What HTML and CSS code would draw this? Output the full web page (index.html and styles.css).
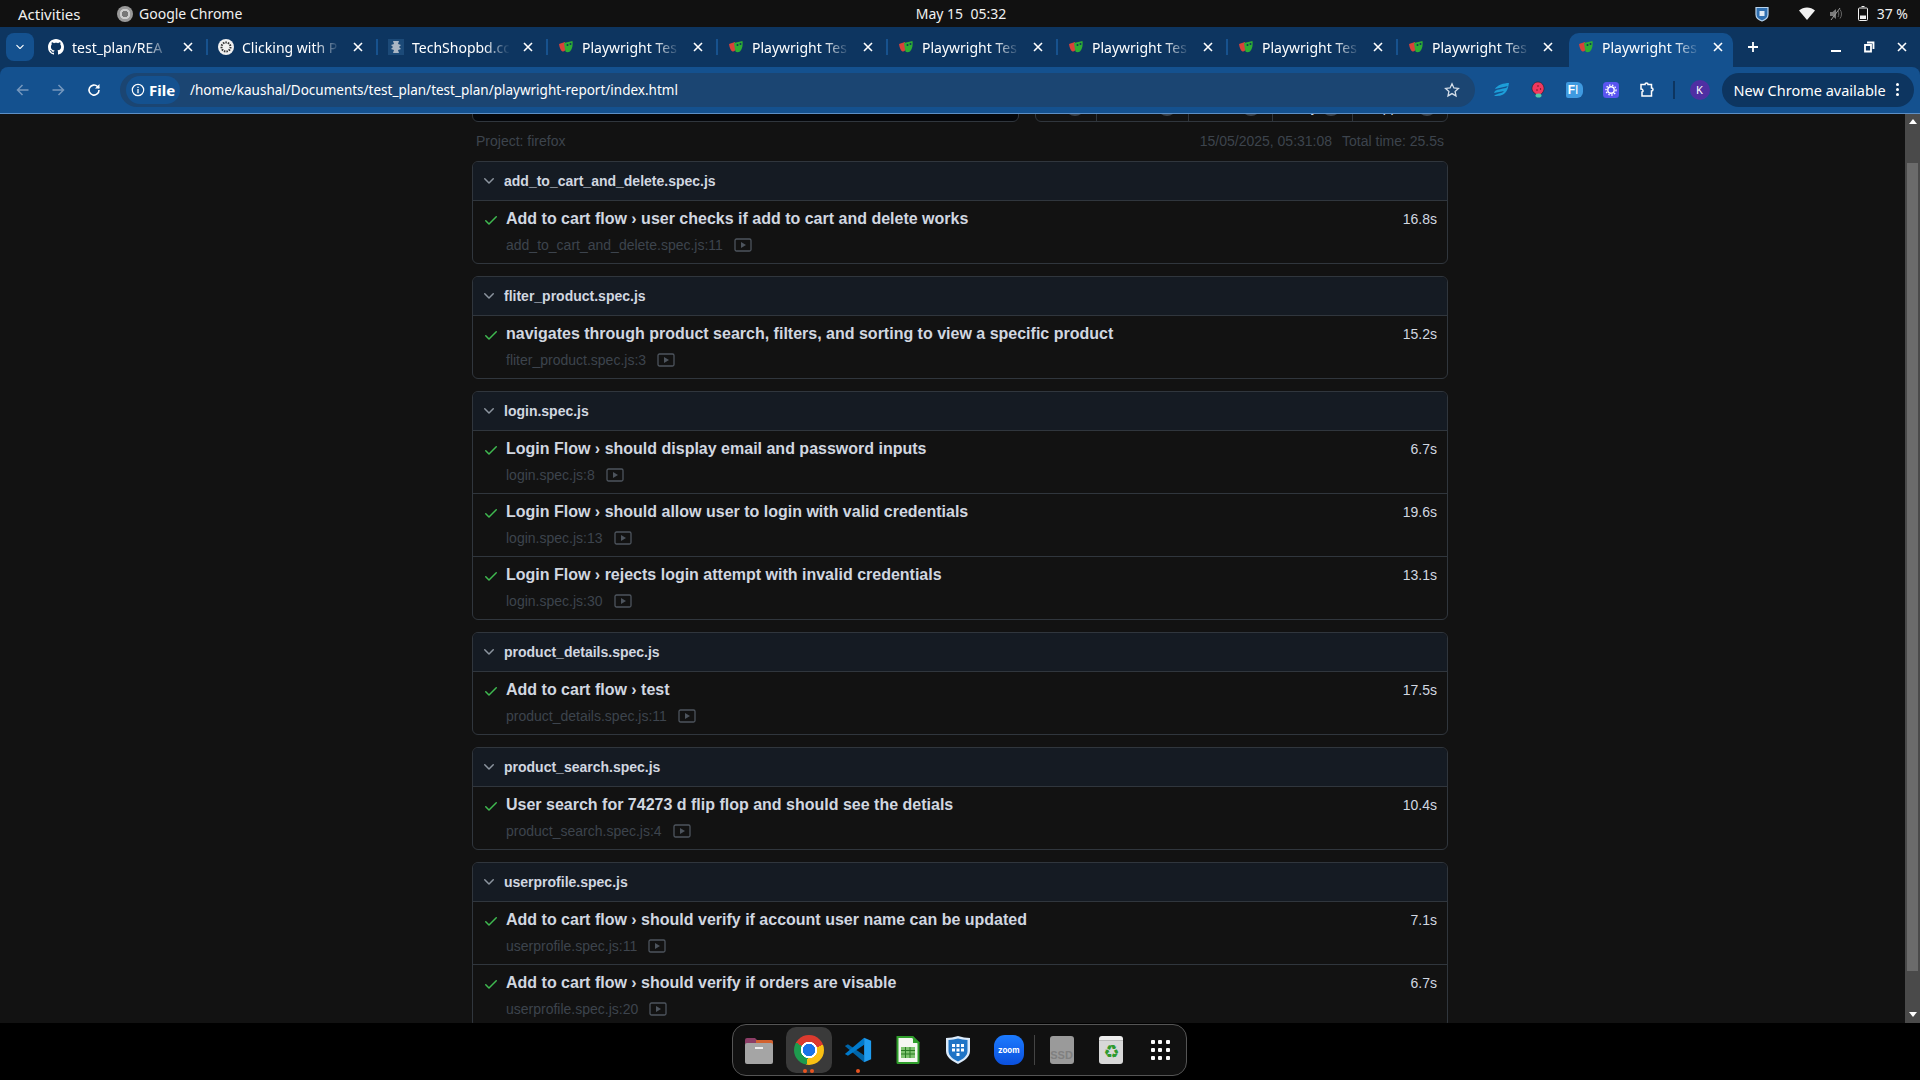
FILE: index.html
```html
<!DOCTYPE html>
<html lang="en">
<head>
  <meta charset="UTF-8">
  <title>Playwright Test Report</title>
  <link rel="stylesheet" href="styles.css">
</head>
<body>
  <svg class="defs" width="0" height="0">
    <symbol id="i-check" viewBox="0 0 16 16"><path d="M13.78 4.22a.75.75 0 0 1 0 1.06l-7.25 7.25a.75.75 0 0 1-1.06 0L2.22 9.28a.751.751 0 0 1 .018-1.042.751.751 0 0 1 1.042-.018L6 10.94l6.72-6.72a.75.75 0 0 1 1.06 0Z"/></symbol>
    <symbol id="i-chevron" viewBox="0 0 16 16"><path d="M12.78 5.22a.749.749 0 0 1 0 1.06l-4.25 4.25a.749.749 0 0 1-1.06 0L3.22 6.28a.749.749 0 1 1 1.06-1.06L8 8.939l3.72-3.719a.749.749 0 0 1 1.06 0Z"/></symbol>
    <symbol id="i-search" viewBox="0 0 16 16"><path d="M10.68 11.74a6 6 0 0 1-7.922-8.982 6 6 0 0 1 8.982 7.922l3.04 3.04a.749.749 0 0 1-.326 1.275.749.749 0 0 1-.734-.215ZM11.5 7a4.499 4.499 0 1 0-8.997 0A4.499 4.499 0 0 0 11.5 7Z"/></symbol>
    <symbol id="i-video" viewBox="0 0 18 14"><rect x="1" y="1" width="16" height="12" rx="1.5" fill="none" stroke="currentColor" stroke-width="1.3"/><path d="M7 4l5 3-5 3z" fill="currentColor"/></symbol>
    <symbol id="i-close" viewBox="0 0 12 12"><path d="M2 2l8 8M10 2l-8 8" stroke="currentColor" stroke-width="1.6" fill="none"/></symbol>
    <symbol id="i-mask" viewBox="0 0 16 16"><path d="M1 5l6-2 1 6c0 2-2 4-3.500 3.500C3 12 1.500 9 1 5z" fill="#d8423a"/><path d="M6 4l8.500-2c.5 4 0 8-2.500 10.500-1.500 1-3.500 1-4.500 0C6.800 10 6.500 7 6 4z" fill="#2ead33"/><circle cx="9.500" cy="6" r="1" fill="#0d3560"/><circle cx="12.500" cy="5" r="1" fill="#0d3560"/></symbol>
  </svg>

  <div class="topbar">
    <div class="topbar-left">
      <span class="activities">Activities</span>
      <span class="chrome-mono"></span>
      <span>Google Chrome</span>
    </div>
    <div class="clock">May 15&nbsp; 05:32</div>
    <div class="topbar-right">
      <svg class="tray-shield" width="14" height="16" viewBox="0 0 14 16"><path d="M1 1.500h12v7c0 3-3 5.500-6 6.500-3-1-6-3.500-6-6.500z" fill="#2f6fb0" stroke="#b9d4ee" stroke-width="1.200"/><rect x="4.500" y="5" width="5" height="5" fill="#dfeaf5"/></svg>
      <svg class="tray-wifi" width="16" height="13" viewBox="0 0 16 13"><path d="M0 3.500C4.500-.5 11.500-.5 16 3.500L8 13z" fill="#f2f2f2"/></svg>
      <svg class="tray-sound" width="15" height="14" viewBox="0 0 15 14"><path d="M1 5h2.500L7 2v10L3.500 9H1z" fill="#7a7a7a"/><path d="M9 4c1 1.500 1 4.500 0 6M11 2.500c2 2.500 2 6.500 0 9" stroke="#666" fill="none"/><path d="M2 13L11 1" stroke="#999"/></svg>
      <svg class="tray-battery" width="10" height="15" viewBox="0 0 10 15"><path d="M3.500.5h3M1.500 2h7a1 1 0 0 1 1 1v10.500a1 1 0 0 1-1 1h-7a1 1 0 0 1-1-1V3a1 1 0 0 1 1-1z" fill="none" stroke="#f2f2f2"/><rect x="2" y="9.500" width="6" height="3.500" fill="#f2f2f2"/></svg>
      <span class="battery-text">37 %</span>
    </div>
  </div>

  <div class="browser">
    <div class="tabstrip">
      <button class="tabs-menu"><svg width="12" height="12"><use href="#i-chevron"/></svg></button>
      <div class="tab">
        <svg class="favicon github" viewBox="0 0 16 16"><path d="M8 0c4.420 0 8 3.580 8 8a8.013 8.013 0 0 1-5.450 7.590c-.4.080-.55-.170-.55-.380 0-.270.010-1.130.010-2.200 0-.750-.250-1.230-.540-1.480 1.780-.2 3.650-.880 3.650-3.950 0-.880-.310-1.590-.820-2.150.080-.2.360-1.020-.080-2.120 0 0-.670-.220-2.200.820-.640-.180-1.320-.270-2-.270-.680 0-1.360.090-2 .270-1.530-1.030-2.200-.820-2.200-.820-.440 1.100-.160 1.920-.080 2.120-.510.560-.820 1.280-.820 2.150 0 3.060 1.860 3.750 3.640 3.950-.230.2-.440.550-.510 1.070-.460.210-1.610.550-2.330-.660-.150-.240-.6-.830-1.230-.820-.670.010-.270.380.010.530.340.190.730.9.820 1.130.160.450.680 1.310 2.690.940 0 .670.010 1.300.010 1.490 0 .210-.150.450-.550.380A7.995 7.995 0 0 1 0 8c0-4.420 3.580-8 8-8Z"/></svg>
        <span class="tab-title">test_plan/REA</span>
        <svg class="tab-close"><use href="#i-close"/></svg>
      </div>
      <div class="tab">
        <svg class="favicon" viewBox="0 0 16 16"><circle cx="8" cy="8" r="8" fill="#f1f1f1"/><circle cx="8" cy="8" r="4.500" fill="none" stroke="#333" stroke-width="2" stroke-dasharray="1.500 1"/></svg>
        <span class="tab-title">Clicking with P</span>
        <svg class="tab-close"><use href="#i-close"/></svg>
      </div>
      <div class="tab">
        <svg class="favicon" viewBox="0 0 16 16"><rect width="16" height="16" fill="#1c4a78"/><path d="M5 2h6l-1 3 3 1-2 2 2 2-3 1 1 3H5l1-3-3-1 2-2-2-2 3-1z" fill="#aab6c4"/></svg>
        <span class="tab-title">TechShopbd.cc</span>
        <svg class="tab-close"><use href="#i-close"/></svg>
      </div>
      <div class="tab"><svg class="favicon"><use href="#i-mask"/></svg><span class="tab-title">Playwright Tes</span><svg class="tab-close"><use href="#i-close"/></svg></div>
      <div class="tab"><svg class="favicon"><use href="#i-mask"/></svg><span class="tab-title">Playwright Tes</span><svg class="tab-close"><use href="#i-close"/></svg></div>
      <div class="tab"><svg class="favicon"><use href="#i-mask"/></svg><span class="tab-title">Playwright Tes</span><svg class="tab-close"><use href="#i-close"/></svg></div>
      <div class="tab"><svg class="favicon"><use href="#i-mask"/></svg><span class="tab-title">Playwright Tes</span><svg class="tab-close"><use href="#i-close"/></svg></div>
      <div class="tab"><svg class="favicon"><use href="#i-mask"/></svg><span class="tab-title">Playwright Tes</span><svg class="tab-close"><use href="#i-close"/></svg></div>
      <div class="tab before-active"><svg class="favicon"><use href="#i-mask"/></svg><span class="tab-title">Playwright Tes</span><svg class="tab-close"><use href="#i-close"/></svg></div>
      <div class="tab active"><svg class="favicon"><use href="#i-mask"/></svg><span class="tab-title">Playwright Tes</span><svg class="tab-close"><use href="#i-close"/></svg></div>
      <svg class="new-tab" width="14" height="14" viewBox="0 0 14 14"><path d="M7 2v10M2 7h10" stroke="#fff" stroke-width="1.800"/></svg>
      <div class="window-controls">
        <svg width="12" height="12" viewBox="0 0 12 12"><path d="M1 10h10" stroke="#fff" stroke-width="2"/></svg>
        <svg width="12" height="12" viewBox="0 0 12 12"><path d="M4 1.500h6.500V8M2 4h6v6.500H2z" fill="none" stroke="#fff" stroke-width="1.800"/></svg>
        <svg width="12" height="12"><use href="#i-close"/></svg>
      </div>
    </div>

    <div class="toolbar">
      <span class="nav-btn"><svg width="16" height="16" viewBox="0 0 16 16"><path d="M13.500 8h-11M7.500 3l-5 5 5 5" fill="none" stroke="#7597bd" stroke-width="1.500"/></svg></span>
      <span class="nav-btn"><svg width="16" height="16" viewBox="0 0 16 16"><path d="M2.500 8h11M8.500 3l5 5-5 5" fill="none" stroke="#7597bd" stroke-width="1.500"/></svg></span>
      <span class="nav-btn reload"><svg width="16" height="16" viewBox="0 0 16 16"><path d="M13 8a5 5 0 1 1-1.500-3.500L13 6" fill="none" stroke="#fff" stroke-width="1.600"/><path d="M13.500 2v4.500H9z" fill="#fff"/></svg></span>
      <div class="address">
        <span class="site-chip">
          <svg width="14" height="14" viewBox="0 0 14 14"><circle cx="7" cy="7" r="5.700" fill="none" stroke="#fff" stroke-width="1.200"/><path d="M7 6v4.200M7 3.700v1.200" stroke="#fff" stroke-width="1.300"/></svg>
          <b>File</b>
        </span>
        <span class="url">/home/kaushal/Documents/test_plan/test_plan/playwright-report/index.html</span>
        <svg class="star" width="16" height="16" viewBox="0 0 16 16"><path d="M8 1.800l1.900 4.100 4.500.5-3.300 3 .9 4.500L8 11.600 4 13.900l.9-4.500-3.300-3 4.500-.5z" fill="none" stroke="#d5dfea" stroke-width="1.300"/></svg>
      </div>
      <span class="ext-btn"><svg width="18" height="16" viewBox="0 0 18 16"><path d="M17 1C12 1 5 3 3 7c4-1 9-2 13-3-1 1-1 1-2 2-4 1-8 1-11 3l-1 2c3-1 7-1 10-2-1 1-2 2-3 2-3 1-5 1-7 3 4 0 8 0 11-3 2-2 3-4 4-10z" fill="#1d9ed8"/></svg></span>
      <span class="ext-btn"><svg width="14" height="17" viewBox="0 0 14 17"><path d="M7 1c3.500 0 6 3 6 6.500S10 14 7.500 14 1 11 1 7.500 3.500 1 7 1z" fill="#f0385f" stroke="#222" stroke-width=".6"/><ellipse cx="7.500" cy="14.500" rx="3" ry="2" fill="#4fc8a8"/><circle cx="7" cy="5" r=".7" fill="#511"/><circle cx="9.500" cy="8" r=".7" fill="#511"/><circle cx="6" cy="9" r=".7" fill="#511"/></svg></span>
      <span class="ext-btn"><span class="ext-fi">F<i>I</i></span></span>
      <span class="ext-btn"><svg width="16" height="16" viewBox="0 0 16 16"><rect width="16" height="16" rx="3.500" fill="#5a55f0"/><circle cx="8" cy="8" r="3.200" fill="none" stroke="#fff" stroke-width="1.400"/><circle cx="8" cy="8" r="5" fill="none" stroke="#fff" stroke-width="1.400" stroke-dasharray="1.400 1.600"/></svg></span>
      <span class="ext-btn"><svg width="17" height="17" viewBox="0 0 17 17"><path d="M2 3.500h4c0-2 3-2 3 0h3.500V7c2 0 2 3 0 3v5H3V11c1.500 0 1.500-3-1-3z" fill="none" stroke="#fff" stroke-width="1.500"/></svg></span>
      <span class="toolbar-sep"></span>
      <span class="avatar">K</span>
      <div class="update-pill"><span>New Chrome available</span><span class="kebab"><i></i><i></i><i></i></span></div>
    </div>
  </div>

  <div class="viewport">
    <main class="report">
      <div class="controls">
        <div class="search"><svg width="16" height="16"><use href="#i-search"/></svg></div>
        <nav class="filters">
          <a class="w-all">All <span class="counter"></span></a>
          <a class="w-passed">Passed <span class="counter"></span></a>
          <a class="w-failed">Failed <span class="counter"></span></a>
          <a class="w-flaky">Flaky <span class="counter"></span></a>
          <a class="w-skipped">Skipped <span class="counter"></span></a>
        </nav>
      </div>
      <div class="meta">
        <span>Project: firefox</span>
        <span class="meta-right"><span>15/05/2025, 05:31:08</span><span>Total time: 25.5s</span></span>
      </div>

      <section class="file-card">
        <header class="file-head"><svg class="chevron"><use href="#i-chevron"/></svg>add_to_cart_and_delete.spec.js</header>
        <div class="test-row">
          <svg class="check"><use href="#i-check"/></svg>
          <div class="test-body">
            <div class="test-title">Add to cart flow › user checks if add to cart and delete works</div>
            <div class="test-loc">add_to_cart_and_delete.spec.js:11<svg class="video"><use href="#i-video"/></svg></div>
          </div>
          <span class="test-time">16.8s</span>
        </div>
      </section>

      <section class="file-card">
        <header class="file-head"><svg class="chevron"><use href="#i-chevron"/></svg>fliter_product.spec.js</header>
        <div class="test-row">
          <svg class="check"><use href="#i-check"/></svg>
          <div class="test-body">
            <div class="test-title">navigates through product search, filters, and sorting to view a specific product</div>
            <div class="test-loc">fliter_product.spec.js:3<svg class="video"><use href="#i-video"/></svg></div>
          </div>
          <span class="test-time">15.2s</span>
        </div>
      </section>

      <section class="file-card">
        <header class="file-head"><svg class="chevron"><use href="#i-chevron"/></svg>login.spec.js</header>
        <div class="test-row">
          <svg class="check"><use href="#i-check"/></svg>
          <div class="test-body">
            <div class="test-title">Login Flow › should display email and password inputs</div>
            <div class="test-loc">login.spec.js:8<svg class="video"><use href="#i-video"/></svg></div>
          </div>
          <span class="test-time">6.7s</span>
        </div>
        <div class="test-row">
          <svg class="check"><use href="#i-check"/></svg>
          <div class="test-body">
            <div class="test-title">Login Flow › should allow user to login with valid credentials</div>
            <div class="test-loc">login.spec.js:13<svg class="video"><use href="#i-video"/></svg></div>
          </div>
          <span class="test-time">19.6s</span>
        </div>
        <div class="test-row">
          <svg class="check"><use href="#i-check"/></svg>
          <div class="test-body">
            <div class="test-title">Login Flow › rejects login attempt with invalid credentials</div>
            <div class="test-loc">login.spec.js:30<svg class="video"><use href="#i-video"/></svg></div>
          </div>
          <span class="test-time">13.1s</span>
        </div>
      </section>

      <section class="file-card">
        <header class="file-head"><svg class="chevron"><use href="#i-chevron"/></svg>product_details.spec.js</header>
        <div class="test-row">
          <svg class="check"><use href="#i-check"/></svg>
          <div class="test-body">
            <div class="test-title">Add to cart flow › test</div>
            <div class="test-loc">product_details.spec.js:11<svg class="video"><use href="#i-video"/></svg></div>
          </div>
          <span class="test-time">17.5s</span>
        </div>
      </section>

      <section class="file-card">
        <header class="file-head"><svg class="chevron"><use href="#i-chevron"/></svg>product_search.spec.js</header>
        <div class="test-row">
          <svg class="check"><use href="#i-check"/></svg>
          <div class="test-body">
            <div class="test-title">User search for 74273 d flip flop and should see the detials</div>
            <div class="test-loc">product_search.spec.js:4<svg class="video"><use href="#i-video"/></svg></div>
          </div>
          <span class="test-time">10.4s</span>
        </div>
      </section>

      <section class="file-card">
        <header class="file-head"><svg class="chevron"><use href="#i-chevron"/></svg>userprofile.spec.js</header>
        <div class="test-row">
          <svg class="check"><use href="#i-check"/></svg>
          <div class="test-body">
            <div class="test-title">Add to cart flow › should verify if account user name can be updated</div>
            <div class="test-loc">userprofile.spec.js:11<svg class="video"><use href="#i-video"/></svg></div>
          </div>
          <span class="test-time">7.1s</span>
        </div>
        <div class="test-row">
          <svg class="check"><use href="#i-check"/></svg>
          <div class="test-body">
            <div class="test-title">Add to cart flow › should verify if orders are visable</div>
            <div class="test-loc">userprofile.spec.js:20<svg class="video"><use href="#i-video"/></svg></div>
          </div>
          <span class="test-time">6.7s</span>
        </div>
      </section>
    </main>
    <div class="scrollbar">
      <span class="arrow-up"></span>
      <div class="scroll-thumb"></div>
      <span class="arrow-down"></span>
    </div>
  </div>

  <div class="dock-area">
    <div class="dock">
      <span class="dock-item">
        <svg width="30" height="30" viewBox="0 0 30 30"><path d="M1 5a2 2 0 0 1 2-2h8l2 2h14a2 2 0 0 1 2 2v6H1z" fill="#8c3d66"/><path d="M12 5h15a2 2 0 0 1 2 2v4H12z" fill="#d2622f"/><path d="M1 10a2 2 0 0 1 2-2h24a2 2 0 0 1 2 2v17a2 2 0 0 1-2 2H3a2 2 0 0 1-2-2z" fill="#a5a5a5"/><rect x="11" y="12" width="8" height="2" fill="#eee"/></svg>
      </span>
      <span class="dock-item running">
        <span class="chrome-logo"></span>
        <span class="dots"><i></i><i></i></span>
      </span>
      <span class="dock-item">
        <svg width="28" height="28" viewBox="0 0 32 32"><path d="M1 11.500 4.500 9.500 23 22v8L1 11.500Z" fill="#0065a9"/><path d="M1 20.500 4.500 22.500 23 10V2L1 20.500Z" fill="#007acc"/><path d="M23 2 31 5.500V26.500L23 30Z" fill="#1f9cf0"/></svg>
        <span class="dots"><i></i></span>
      </span>
      <span class="dock-item">
        <svg width="24" height="28" viewBox="0 0 24 28"><path d="M1.500 1h15l6 6v19.500a.5.500 0 0 1-.5.500H2a.5.500 0 0 1-.5-.5z" fill="#f5f7f2" stroke="#2f9e2b" stroke-width="2"/><path d="M17 0l7 7h-7z" fill="#2f9e2b"/><path d="M5 11h14v11H5z" fill="#7ec36f"/><path d="M5 14.500h14M5 18h14M9.500 11v11M14 11v11" stroke="#2a7c25"/></svg>
      </span>
      <span class="dock-item">
        <svg width="26" height="30" viewBox="0 0 26 30"><path d="M1 3c4 0 8-1 12-2 4 1 8 2 12 2v13c0 6-6 10-12 13C7 26 1 22 1 16z" fill="#dbeafa"/><path d="M3.500 5c3.500 0 6.500-1 9.500-1.500 3 .5 6 1.500 9.500 1.500v11c0 5-4.500 8-9.500 10.500C8 24 3.500 21 3.500 16z" fill="#1f74c6"/><path d="M7 9h3v3H7zM11.500 9h3v3h-3zM16 9h3v3h-3zM7 13.500h3v3H7zM11.500 13.500h3v3h-3zM16 13.500h3v3h-3zM11.500 18h3v3h-3z" fill="#fff"/></svg>
      </span>
      <span class="dock-item"><span class="zoom-logo">zoom</span></span>
      <span class="dock-sep"></span>
      <span class="dock-item"><span class="ssd">SSD</span></span>
      <span class="dock-item"><span class="trash">♻</span></span>
      <span class="dock-item"><span class="app-grid"><i></i><i></i><i></i><i></i><i></i><i></i><i></i><i></i><i></i></span></span>
    </div>
  </div>
</body>
</html>
```

FILE: styles.css
```css
* {
  box-sizing: border-box;
}
html, body {
  height: 100%;
}
body {
  margin: 0;
  height: 1080px;
  overflow: hidden;
  display: flex;
  flex-direction: column;
  background: #000;
  font-family: 'Liberation Sans', Arial, sans-serif;
  font-size: 14px;
}
.defs {
  position: absolute;
}

/* ubuntu top bar */
.topbar {
  height: 27px;
  flex: none;
  display: grid;
  grid-template-columns: 1fr auto 1fr;
  align-items: center;
  background: #111;
  color: #f0f0f0;
  font-family: 'Noto Sans', sans-serif;
  font-size: 14px;
}
.topbar-left {
  display: flex;
  align-items: center;
  padding-left: 18px;
}
.activities {
  width: 99px;
  font-size: 15px;
}
.chrome-mono {
  width: 16px;
  height: 16px;
  margin-right: 6px;
  border-radius: 50%;
  background: radial-gradient(circle, #777 0 3px, #ccc 3.500px 5px, #999 5.500px);
}
.clock {
  padding-left: 2px;
}
.topbar-right {
  display: flex;
  align-items: center;
  justify-content: flex-end;
  padding-right: 12px;
}
.tray-wifi {
  margin-left: 30px;
}
.tray-sound {
  margin-left: 14px;
}
.tray-battery {
  margin-left: 14px;
}
.battery-text {
  margin-left: 9px;
}

/* browser chrome */
.browser {
  flex: none;
  background: #0d3560;
  color: #fff;
  font-family: 'Noto Sans', sans-serif;
}
.tabstrip {
  height: 40px;
  display: flex;
  align-items: flex-end;
  padding-left: 6px;
}
.tabs-menu {
  width: 28px;
  height: 28px;
  margin: 0 5px 6px 0;
  padding: 0;
  border: none;
  border-radius: 8px;
  background: #14518f;
  display: flex;
  align-items: center;
  justify-content: center;
}
.tabs-menu svg {
  fill: #fff;
}
.tab {
  position: relative;
  width: 170px;
  height: 34px;
  flex: none;
  display: flex;
  align-items: center;
  padding: 0 0 6px 9px;
  font-size: 14px;
}
.tab::after {
  content: "";
  position: absolute;
  right: 1px;
  top: 6px;
  bottom: 12px;
  width: 2px;
  background: #17528e;
}
.tab.before-active::after,
.tab.active::after {
  display: none;
}
.tab.active {
  width: 164px;
  background: #14518f;
  border-radius: 10px 10px 0 0;
}
.favicon {
  width: 16px;
  height: 16px;
  flex: none;
}
.github {
  fill: #fff;
}
.tab-title {
  width: 100px;
  margin-left: 8px;
  white-space: nowrap;
  -webkit-mask-image: linear-gradient(90deg, #000 72%, transparent 98%);
  mask-image: linear-gradient(90deg, #000 72%, transparent 98%);
}
.tab-close {
  width: 12px;
  height: 12px;
  margin-left: 10px;
  flex: none;
}
.new-tab {
  align-self: center;
  margin: 0 0 0 13px;
}
.window-controls {
  margin-left: auto;
  align-self: center;
  display: flex;
  gap: 21px;
  padding-right: 12px;
}
.toolbar {
  height: 47px;
  display: flex;
  align-items: center;
  padding: 0 0 1px 5px;
  background: #14518f;
  border-radius: 8px 8px 0 0;
  border-bottom: 1px solid #5c8fc6;
}
.nav-btn {
  width: 35px;
  display: flex;
  justify-content: center;
}
.reload {
  padding-left: 2px;
}
.address {
  width: 1355px;
  height: 34px;
  margin-left: 10px;
  padding: 0 15px 0 6px;
  display: flex;
  align-items: center;
  border-radius: 17px;
  background: #1b4572;
}
.site-chip {
  height: 28px;
  width: 54px;
  display: flex;
  align-items: center;
  gap: 4px;
  padding-left: 5px;
  border-radius: 14px;
  background: #14518f;
  font-size: 15px;
}
.url {
  margin-left: 10px;
  font-size: 13.500px;
  white-space: nowrap;
}
.star {
  margin-left: auto;
}
.ext-btn {
  width: 36.500px;
  flex: none;
  display: flex;
  justify-content: center;
  align-items: center;
}
.address + .ext-btn {
  margin-left: 8px;
}
.ext-fi {
  width: 17px;
  height: 16px;
  padding-left: 2px;
  border-radius: 2px 6px 6px 2px;
  background: #3f9ae0;
  font: bold 12px/16px 'Liberation Sans', sans-serif;
}
.ext-fi i {
  font-style: normal;
  font-weight: normal;
}
.toolbar-sep {
  width: 2px;
  height: 18px;
  margin-left: 7px;
  background: #0d3560;
}
.avatar {
  width: 20px;
  height: 20px;
  margin-left: 15px;
  border-radius: 50%;
  background: #4f2fa3;
  font-size: 11px;
  line-height: 20px;
  text-align: center;
}
.update-pill {
  width: 192px;
  height: 34px;
  margin-left: 12px;
  padding-left: 12px;
  display: flex;
  align-items: center;
  border-radius: 17px;
  background: #0d3560;
  font-size: 14.500px;
  white-space: nowrap;
}
.kebab {
  display: flex;
  flex-direction: column;
  gap: 2px;
  margin-left: auto;
  margin-right: 15px;
}
.kebab i {
  width: 3px;
  height: 3px;
  border-radius: 50%;
  background: #fff;
}

/* page area, scrolled a bit down the report */
.viewport {
  height: 909px;
  flex: none;
  display: flex;
  background: #121212;
  overflow: hidden;
}
.report {
  width: 976px;
  margin-left: 472px;
  color: #d1d7e0;
}
.controls {
  display: flex;
  justify-content: space-between;
  height: 32px;
  margin-top: -24px;
}
.search {
  width: 547px;
  padding: 8px 0 0 8px;
  border: 1px solid #30363d;
  border-radius: 6px;
  background: #05070b;
  fill: #8b949e;
}
.filters {
  width: 413px;
  display: flex;
  border: 1px solid #30363d;
  border-radius: 6px;
  color: #d1d7e0;
}
.filters a {
  display: flex;
  align-items: center;
  justify-content: center;
  gap: 3px;
  padding-top: 2px;
  border-right: 1px solid #30363d;
  white-space: nowrap;
}
.filters a:last-child {
  border-right: none;
}
.w-all { width: 61px; }
.w-passed { width: 92px; }
.w-failed { width: 84px; }
.w-flaky { width: 80px; }
.w-skipped { flex: 1; }
.counter {
  width: 20px;
  height: 20px;
  margin-top: -2px;
  border-radius: 10px;
  background: #3d444d;
}
.meta {
  height: 39px;
  padding: 0 4px 2px;
  display: flex;
  justify-content: space-between;
  align-items: center;
  color: #3d444d;
}
.meta-right {
  display: flex;
  gap: 10px;
}
.file-card {
  margin-bottom: 12px;
  border: 1px solid #30363d;
  border-radius: 6px;
  overflow: hidden;
}
.file-head {
  height: 39px;
  display: flex;
  align-items: center;
  padding-left: 8px;
  background: #151b23;
  border-bottom: 1px solid #30363d;
  font-weight: bold;
}
.chevron {
  width: 16px;
  height: 16px;
  margin-right: 7px;
  fill: #8b949e;
}
.test-row {
  height: 63px;
  display: flex;
  padding: 6px 10px 0 10px;
  border-bottom: 1px solid #30363d;
}
.test-row:last-child {
  height: 62px;
  border-bottom: none;
}
.check {
  width: 16px;
  height: 16px;
  margin-top: 5px;
  flex: none;
  fill: #3fb950;
}
.test-body {
  flex: 1;
  margin-left: 7px;
}
.test-title {
  font-size: 16px;
  font-weight: bold;
  line-height: 24px;
}
.test-loc {
  margin-top: 5px;
  display: flex;
  align-items: center;
  line-height: 18px;
  color: #3d444d;
}
.video {
  width: 18px;
  height: 14px;
  margin-left: 11px;
  color: #4d545d;
}
.test-time {
  line-height: 24px;
}
.scrollbar {
  width: 15px;
  margin-left: auto;
  background: #4a4a4a;
  display: flex;
  flex-direction: column;
  align-items: center;
}
.arrow-up,
.arrow-down {
  width: 0;
  height: 0;
  border-left: 4px solid transparent;
  border-right: 4px solid transparent;
}
.arrow-up {
  margin-top: 5px;
  border-bottom: 5px solid #fff;
}
.arrow-down {
  margin-top: 41px;
  border-top: 5px solid #fff;
}
.scroll-thumb {
  width: 11px;
  height: 808px;
  margin-top: 39px;
  background: #6b6b6b;
}

/* ubuntu dock */
.dock-area {
  flex: 1;
  background: #000;
  display: flex;
  justify-content: center;
  padding: 1px 1px 0 0;
}
.dock {
  width: 455px;
  height: 52px;
  display: flex;
  align-items: center;
  padding: 0 1px;
  background: #111;
  border: 1px solid #555;
  border-radius: 14px;
}
.dock-item {
  position: relative;
  width: 46px;
  height: 46px;
  margin: 0 2px;
  display: flex;
  align-items: center;
  justify-content: center;
  border-radius: 10px;
}
.dock-item.running {
  background: #3a3a3a;
}
.dots {
  position: absolute;
  bottom: 0;
  left: 0;
  right: 0;
  display: flex;
  justify-content: center;
  gap: 3px;
}
.dots i {
  width: 4px;
  height: 4px;
  border-radius: 50%;
  background: #e95420;
}
.chrome-logo {
  width: 30px;
  height: 30px;
  border-radius: 50%;
  background:
    radial-gradient(circle, #1a73e8 0 6px, #fff 6.500px 8px, transparent 8.500px),
    conic-gradient(#db3a2e 0 70deg, #f9c013 70deg 190deg, #1e9b4e 190deg 300deg, #db3a2e 300deg);
}
.zoom-logo {
  width: 30px;
  height: 30px;
  margin-left: 2px;
  border-radius: 11px;
  background: linear-gradient(#1c7bff, #0b50dd);
  color: #fff;
  font: bold 8px/30px 'Inter', sans-serif;
  text-align: center;
}
.dock-sep {
  width: 1px;
  height: 30px;
  margin: 0 1px;
  background: #444;
}
.ssd {
  width: 24px;
  height: 28px;
  margin-left: 2px;
  padding-top: 12px;
  border-radius: 3px;
  background: #9a9a9a;
  color: #808080;
  font: bold 11px/14px 'Liberation Sans', sans-serif;
  text-align: center;
  overflow: hidden;
}
.trash {
  width: 24px;
  height: 28px;
  margin-left: 2px;
  padding-top: 6px;
  border-radius: 3px;
  background: linear-gradient(#eee 0 4px, #bbb 4px 5px, #d8d8d8 5px);
  color: #2f9a2f;
  font: bold 18px/20px 'DejaVu Sans', sans-serif;
  text-align: center;
}
.app-grid {
  width: 19px;
  display: grid;
  grid-template-columns: repeat(3, 4px);
  gap: 4px 3.500px;
}
.app-grid i {
  width: 4px;
  height: 4px;
  background: #fff;
  border-radius: 1px;
}
```
